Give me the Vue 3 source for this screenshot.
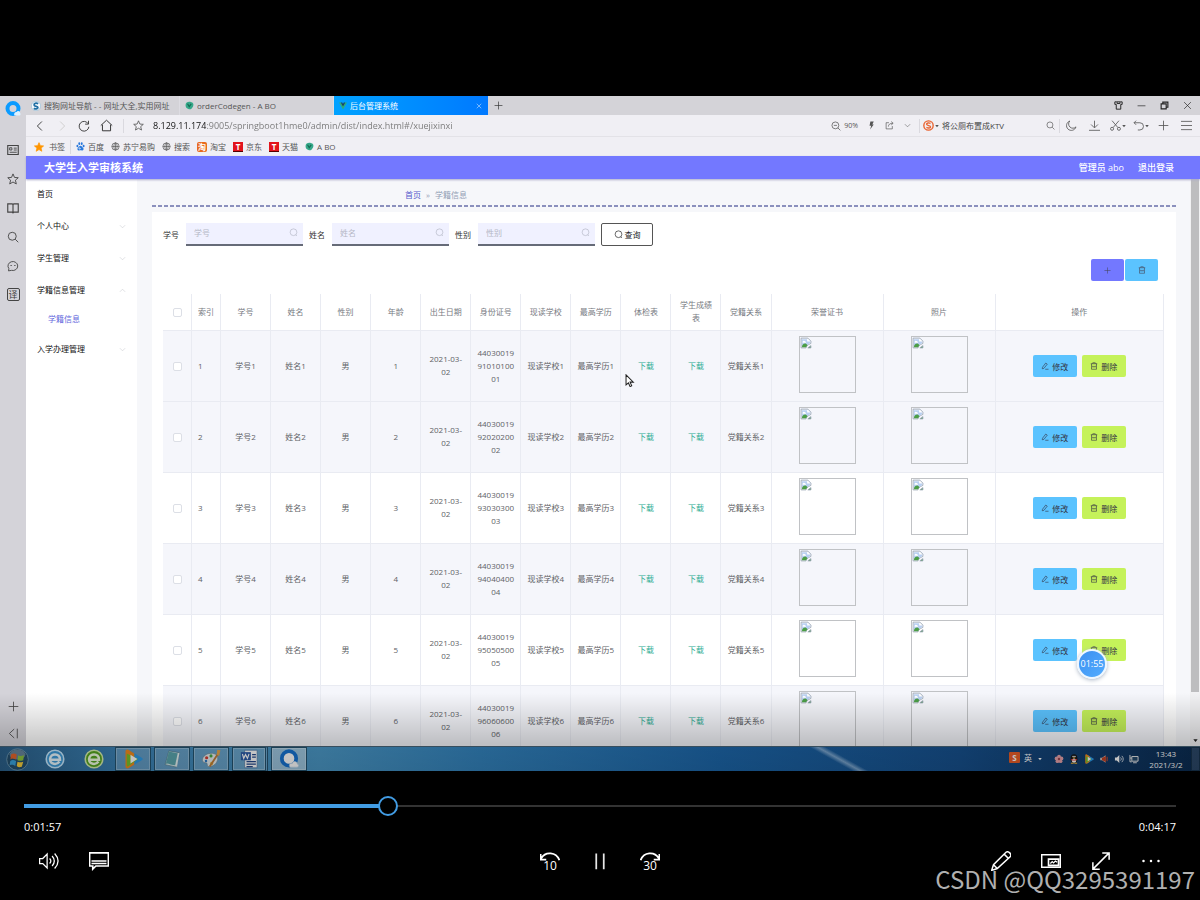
<script setup>
import { h, ref, computed } from 'vue'

const glyphs = {
  back: '<path d="M10.5 2 4.5 8l6 6"/>',
  forward: '<path d="M5.5 2l6 6-6 6"/>',
  reload: '<path d="M13.6 5A6.5 6.5 0 1 0 14.5 9"/><path d="M14 1v4.500h-4.500"/>',
  home: '<path d="M1 8 8 1.500 15 8M3 7v7.500h10V7"/>',
  star: '<path d="M8 1.200l2 4.700 5 .4-3.800 3.300 1.200 5L8 12l-4.400 2.600 1.200-5L1 6.300l5-.4z"/>',
  starFull: '<path fill="currentColor" d="M8 1l2.100 4.800 5.200.5-4 3.400 1.200 5.100L8 12.100l-4.500 2.700 1.200-5.100-4-3.400 5.200-.5z"/>',
  zoomOut: '<circle cx="7" cy="7" r="5.500"/><path d="M11 11l4 4M4.500 7h5"/>',
  search: '<circle cx="7" cy="7" r="5.300"/><path d="M11 11l4 4"/>',
  round: '<circle cx="8" cy="7.500" r="6"/><path d="M12 12l2 2.200"/>',
  flash: '<path fill="currentColor" stroke="none" d="M6 1h6l-2.500 5H12l-6.500 9 2-6.500H4.500z"/>',
  share: '<path d="M7 3H2v11h11V9M6 10c0-4 3-6 8-6M11 1l3.500 3L11 7"/>',
  down: '<path d="M2 5l6 6 6-6"/>',
  up: '<path d="M2 11l6-6 6 6"/>',
  caret: '<path fill="currentColor" stroke="none" d="M1 4h14L8 13z"/>',
  moon: '<path d="M5.500 1.500A7 7 0 1 0 14.500 10 6 6 0 0 1 5.500 1.500z"/>',
  download: '<path d="M8 1v10M3 6.500l5 5 5-5M0 15h16"/>',
  scissors: '<path d="M3 1l8.500 10M13 1 4.500 11"/><circle cx="3" cy="12.800" r="2.200"/><circle cx="13" cy="12.800" r="2.200"/>',
  undo: '<path d="M1.500 4h8.500a5 5 0 0 1 0 10.500H7M4.500 1l-3 3 3 3"/>',
  plus: '<path d="M8 1v14M1 8h14"/>',
  menu: '<path d="M0 2h16M0 8h16M0 14h16"/>',
  close: '<path d="M2 2l12 12M14 2 2 14"/>',
  min: '<path d="M1 8.500h14"/>',
  restore: '<path stroke-width="2" d="M2 5h9v9H2zM5 5V2h9v9h-3"/>',
  shirt: '<path stroke-width="1.700" d="M5 1.500H1.500V6H4v8.500h8V6h2.500V1.500H11M5 1.500h6M5.500 2v2.500h5V2"/>',
  card: '<path stroke-width="1.500" d="M1 2h14v12H1z"/><path d="M3.500 5h3v3h-3zM9 5.500h4M9 8h4M3.500 11H13"/>',
  book: '<path stroke-width="1.500" d="M1 2.500h6l1 1 1-1h6v11H9l-1 1-1-1H1zM8 3.500V14"/>',
  chat: '<path d="M2 14.500l.5-3A6.500 6 0 1 1 6 13.800z"/><path stroke-width="1.600" d="M5.500 6.500v1.500M10.500 6.500v1.500"/>',
  collapse: '<path d="M9 1.500 2 8l7 6.500M13.500 1v14"/>',
  globe: '<circle cx="8" cy="8" r="6.500"/><ellipse cx="8" cy="8" rx="3" ry="6.500"/><path d="M1.500 8h13M8 1.500v13"/>',
  paw: '<g fill="#2878dc" stroke="none"><ellipse cx="2.500" cy="7" rx="1.700" ry="2.200"/><ellipse cx="5.800" cy="3" rx="1.700" ry="2.400"/><ellipse cx="10.200" cy="3" rx="1.700" ry="2.400"/><ellipse cx="13.500" cy="7" rx="1.700" ry="2.200"/><path d="M8 6.500c2 0 3 2.500 4.500 3.800 2 2 .8 5-2 4.700-1.700-.2-3.300-.2-5 0-2.800.3-4-2.700-2-4.700C5 9 6 6.500 8 6.500z"/></g><circle cx="6.500" cy="11.500" r="1.200" stroke="#fff"/>',
  vue: '<path fill="#2fae7c" stroke="none" d="M0 1h4l4 7 4-7h4L8 15z"/><path fill="#24435a" stroke="none" d="M3.500 1h3L8 3.800 9.500 1h3L8 9z"/>',
  abo: '<path fill="#35a889" stroke="none" d="M1 7C1 2 7 0 11 2c4 0 5 5 3 8-2 4-5 6-8 4C2 13 1 10 1 7z"/><path stroke="#156b54" stroke-width="2" d="M4.500 5l3 5 3.500-5"/>',
  sogou: '<circle cx="8" cy="8" r="7.500" fill="#f4f8fb" stroke="#9fc3da"/><path stroke="#1f6fa5" stroke-width="2.800" d="M11.500 4.500C8 2.500 4.500 4 5 6.500s6 1.500 6 4-4 3-6.500 1.200"/>',
  sogouRed: '<circle cx="8" cy="8" r="6.800" stroke="#e9622f" stroke-width="2"/><path stroke="#e9622f" stroke-width="2" d="M11 5C9 3.800 5 4 5.200 6.200S11 7.800 11 10s-4 2-6 .8"/>',
  bin: '<path d="M1.500 3.500h13M3 3.500v11h10v-11M5.500 3.500v-2h5v2M5.500 7.500v3M10.500 7.500v3M5.500 9.500h5"/>',
  edit: '<path d="M3 10.500 9.500 2l3 2.300L6 12.500l-3.500 1zM8.500 14.500H15"/>',
  broken: '<path fill="#fff" stroke="#9aa6b5" d="M1.500 1.500h9l4 4v3l-3 1.500-2.500 2-1 2.500H1.500z"/><path fill="#b9d0f2" stroke="none" d="M2.500 3h7v3h4v2L8 12H2.500z"/><path fill="#fff" stroke="none" d="M3.500 6.500c0-2 3-2 3.500-.5 1.500 0 1.500 1.500.5 1.500h-4z"/><path fill="#4b9e46" stroke="none" d="M2.500 13.500c0-3 3-5.500 5.500-4.500l2 1.500-2 3z"/><path fill="#4b9e46" stroke="#9aa6b5" d="M10.500 14.500l4-3v3z"/>',
}
const art = {
  browser: '<circle cx="16" cy="15" r="11" fill="none" stroke="#0b9bff" stroke-width="8"/><path fill="#dff2ff" d="M19 29c-2-4 1-7 4-7 2-4 8-2 7 2 2 1 1 5-1 5z"/>',
  orb: '<circle cx="16" cy="16" r="15" fill="#24506f" stroke="#7fa8c0"/><ellipse cx="16" cy="9" rx="11" ry="7" fill="#fff" opacity=".3"/><path fill="#e4642b" d="M7 9c3-2 5-2 8 0l-1 7c-3-2-6-2-8 0z"/><path fill="#8cc43f" d="M17 10c3 2 5 1 8 0l-1 7c-3 1-6 1-8 0z"/><path fill="#39a3dc" d="M6 18c3-2 5-1 8 0l-1 7c-3-2-5-2-8-1z"/><path fill="#f9cf3d" d="M16 19c3 1 5 1 8 0l-2 7c-3 1-5 1-7-1z"/>',
  ie: '<circle cx="16" cy="16" r="14" fill="#3d9bd9" stroke="#c9eaff" stroke-width="2.500"/><path fill="none" stroke="#e9f8ff" stroke-width="4" d="M8 17h16c0-11-15-11-16-1 0 9 11 10 15 4"/>',
  ie360: '<circle cx="16" cy="16" r="14" fill="#56a51f" stroke="#d7f0ae" stroke-width="2.500"/><path fill="none" stroke="#f1ffe2" stroke-width="4" d="M8 17h16c0-11-15-11-16-1 0 9 11 10 15 4"/>',
  video: '<path fill="#2c9be8" d="M10 2l20 12c2 1 2 3 0 4L10 30z"/><path fill="#f28b1e" d="M4 4c0-3 3-4 6-2l8 5v18l-8 5c-3 2-6 1-6-2z"/><path fill="#78c22b" d="M6 7l18 9L8 28c-2 1-2-2-2-4z"/><path fill="#fff" d="M12 9l11 7-11 7z"/>',
  note: '<path fill="#d7ecef" stroke="#4b7787" d="M11 3l17 3-5 23L5 25z"/><path fill="#5ba6ae" d="M11 4l15 3-4 19C14 26 8 21 6 24z"/><path fill="#f7ffff" d="M25 7l3-1-4 23-3-3z" opacity=".8"/>',
  paint: '<path fill="#e6edf0" stroke="#6d8794" d="M15 7c9-1 14 5 11 12-2 6-9 10-14 9-4-1 0-5-4-6-5 0-7-3-5-8 2-4 7-7 12-7z"/><circle cx="9" cy="14" r="2.500" fill="#d63a2e"/><circle cx="16" cy="11" r="2.500" fill="#49a942"/><circle cx="8" cy="19" r="2" fill="#2d7cc8"/><circle cx="17" cy="23" r="2.500" fill="#e6bd2f"/><path stroke="#c17e39" stroke-width="3" d="M14 28 27 8"/><path fill="#e6a64b" d="M25 9l1-8 5 1-2 9z"/>',
  word: '<path fill="#fff" stroke="#47719e" d="M9 2h20v28H9z"/><path stroke="#23488b" stroke-width="2" d="M21 9h6M21 13h6M12 20h15M12 24h15M12 28h10"/><path fill="#2d5ba7" d="M3 5h16v13H3z"/><path fill="none" stroke="#fff" stroke-width="1.800" d="M5.500 8l2 7 3-6 3 6 2.500-7"/>',
  cloud: '<circle cx="16" cy="15" r="11.500" fill="#fff" stroke="#1673d1" stroke-width="6"/><path fill="#fff" stroke="#bcd7ee" d="M18 29c-3-2-1-7 3-6 2-5 9-3 8 1 4 1 2 5 0 5z"/>',
  flower: '<g fill="#e7a2aa"><circle cx="16" cy="8" r="6"/><circle cx="24" cy="14" r="6"/><circle cx="21" cy="23" r="6"/><circle cx="11" cy="23" r="6"/><circle cx="8" cy="14" r="6"/></g><circle cx="16" cy="16" r="4" fill="#a04952"/>',
  penguin: '<ellipse cx="16" cy="15" rx="11" ry="14" fill="#161616"/><ellipse cx="16" cy="21" rx="7" ry="7" fill="#fff"/><path fill="#d92b22" d="M6 15c6 4 14 4 20 0v3c-6 4-14 4-20 0z"/><path fill="#f6b42c" d="M11 11h10l-5 4zM6 28h9v3H6zM17 28h9v3h-9z"/><circle cx="13" cy="8" r="2.500" fill="#fff"/><circle cx="19" cy="8" r="2.500" fill="#fff"/>',
  horn: '<path fill="#d8d3cf" d="M4 12h6L21 4v24l-11-8H4z"/><path fill="#c34022" d="M9 13 22 6v20L9 19z"/><path fill="none" stroke="#d64d2d" stroke-width="3" d="M26 9v14"/>',
  sound: '<path fill="#fff" d="M3 11h6l8-8v26l-8-8H3z"/><path fill="none" stroke="#fff" stroke-width="2.500" d="M21 11c3 3 3 7 0 10M25 6c6 6 6 14 0 20"/>',
  net: '<path fill="#23496c" stroke="#eee" stroke-width="3" d="M9 8h20v15H9zM13 28h12M3 3v10h6M3 13v12h6"/>',
  volume: '<path fill="none" stroke="#fff" stroke-width="2" d="M1 12h5l7-7v22l-7-7H1zM17 12q4 4 0 8M21 8q7 8 0 16M25 4q11 12 0 24"/>',
  caption: '<path fill="none" stroke="#fff" stroke-width="2.600" d="M1 3h30v21H11l-5 5v-5H1zM4 16h24M4 20h24"/>',
  pencil: '<path fill="none" stroke="#fff" stroke-width="2.400" d="M1 31l3-9L24 2q3-2 6 1t1 6L10 28zM21 5l7 7M4 22l6 6"/>',
  mini: '<path fill="none" stroke="#fff" stroke-width="2.600" d="M1 6h30v20H1zM12 13h16v10H12z"/><path fill="none" stroke="#fff" stroke-width="2" d="M15 20l3-3 2 2 3-3 3 2"/>',
  full: '<path fill="none" stroke="#fff" stroke-width="2.400" d="M3 29 29 3M18 3h11v11M3 18v11h11"/>',
  more: '<g fill="#fff"><circle cx="4" cy="16" r="2"/><circle cx="16" cy="16" r="2"/><circle cx="28" cy="16" r="2"/></g>',
  pause: '<path stroke="#e6e6e6" stroke-width="2.800" d="M10 4v25M22 4v25"/>',
  rewind: '<path fill="none" stroke="#fff" stroke-width="2.800" d="M31 13C26 0 9-2 2 10M1 3v9h9"/>',
  skip: '<path fill="none" stroke="#fff" stroke-width="2.800" d="M1 13C6 0 23-2 30 10M31 3v9h-9"/>',
  cursor: '<path fill="#fff" stroke="#222" stroke-width="2.500" d="M5 2v25l6-5 4 9 4-2-4-9h8z"/>',
}
const Icon = (p) => h('svg', {
  class: 'icon', width: p.s || 10, height: p.s || 10, viewBox: '0 0 16 16', fill: 'none',
  stroke: 'currentColor', 'stroke-width': 1.2, 'aria-hidden': 'true', innerHTML: glyphs[p.n],
})
Icon.props = ['n', 's']
const Art = (p) => h('svg', {
  class: 'icon', width: p.s || 20, height: p.s || 20, viewBox: '0 0 32 32', 'aria-hidden': 'true', innerHTML: art[p.n],
})
Art.props = ['n', 's']

const bookmarks = [
  { icon: 'paw', label: '百度' }, { icon: 'globe', label: '苏宁易购' }, { icon: 'globe', label: '搜索' },
  { badge: '淘', kind: 'tao', label: '淘宝' }, { badge: 'T', kind: 'tee', label: '京东' },
  { badge: 'T', kind: 'tee', label: '天猫' }, { icon: 'abo', label: 'A BO' },
]
const menu = [
  { label: '首页' }, { label: '个人中心', icon: 'down' }, { label: '学生管理', icon: 'down' },
  { label: '学籍信息管理', icon: 'up', child: '学籍信息' }, { label: '入学办理管理', icon: 'down' },
]
const filters = ['学号', '姓名', '性别']
const columns = ['索引', '学号', '姓名', '性别', '年龄', '出生日期', '身份证号', '现读学校', '最高学历', '体检表', '学生成绩表', '党籍关系', '荣誉证书', '照片', '操作']
const rows = [1, 2, 3, 4, 5, 6].map((n) => ({ n, id: `440300199${n}0${n}0${n}000${n}` }))
const apps = ['video', 'note', 'paint', 'word', 'cloud']
const tray = ['flower', 'penguin', 'video', 'horn', 'sound', 'net']
const url = ref('8.129.11.174:9005/springboot1hme0/admin/dist/index.html#/xuejixinxi')
const query = ref('将公厕布置成KTV')
const position = ref(313)
const played = computed(() => ({ '--played': `${position.value / 10}%` }))
</script>

<template>
  <main class="player">
    <section class="screen">
      <div class="browser">
        <nav class="rail" aria-label="浏览器侧栏">
          <Art n="browser" :s="16" class="rail-logo" />
          <button v-for="i in ['card', 'star', 'book', 'search', 'chat']" :key="i" :aria-label="i"><Icon :n="i" :s="12" /></button>
          <button class="translate"><span>译</span></button>
          <span class="grow"></span>
          <button aria-label="添加"><Icon n="plus" :s="11" /></button>
          <button aria-label="收起"><Icon n="collapse" :s="11" /></button>
        </nav>
        <div class="window">
          <div class="tabs">
            <button class="tab"><Icon n="sogou" :s="10" /><span class="tab-text">搜狗网址导航 - - 网址大全,实用网址</span></button>
            <button class="tab"><Icon n="abo" :s="9" /><span class="tab-text">orderCodegen - A BO</span></button>
            <button class="tab active"><Icon n="vue" :s="8" /><span class="tab-text">后台管理系统</span><Icon n="close" :s="6" /></button>
            <button class="new-tab" aria-label="新标签页"><Icon n="plus" :s="9" /></button>
            <span class="grow"></span>
            <button v-for="i in ['shirt', 'min', 'restore', 'close']" :key="i" class="win" :aria-label="i"><Icon :n="i" :s="9" /></button>
          </div>
          <div class="address">
            <button class="tool dark" aria-label="后退"><Icon n="back" :s="12" /></button>
            <button class="tool pale" aria-label="前进"><Icon n="forward" :s="12" /></button>
            <button class="tool dark" aria-label="刷新"><Icon n="reload" :s="12" /></button>
            <button class="tool dark" aria-label="主页"><Icon n="home" :s="13" /></button>
            <i class="bar left"></i>
            <button class="tool" aria-label="收藏"><Icon n="star" :s="11" /></button>
            <input v-model="url" class="url" aria-label="地址" />
            <button class="zoom"><Icon n="zoomOut" :s="10" />90%</button>
            <button class="small" aria-label="极速"><Icon n="flash" :s="9" /></button>
            <button class="small" aria-label="分享"><Icon n="share" :s="9" /></button>
            <button class="small" aria-label="更多"><Icon n="down" :s="7" /></button>
            <i class="bar"></i>
            <div class="search">
              <Icon n="sogouRed" :s="11" /><Icon n="caret" :s="4" />
              <input v-model="query" aria-label="搜索" />
              <button aria-label="开始搜索"><Icon n="search" :s="9" /></button>
            </div>
            <i class="bar"></i>
            <button class="tool wide" aria-label="夜间"><Icon n="moon" :s="11" /></button>
            <button class="tool wide" aria-label="下载"><Icon n="download" :s="11" /></button>
            <button class="tool wide" aria-label="截图"><Icon n="scissors" :s="11" /><Icon n="caret" :s="4" /></button>
            <button class="tool wide" aria-label="撤销"><Icon n="undo" :s="11" /><Icon n="caret" :s="4" /></button>
            <button class="tool wide" aria-label="添加"><Icon n="plus" :s="11" /></button>
            <button class="tool wide" aria-label="菜单"><Icon n="menu" :s="11" /></button>
          </div>
          <div class="bookmarks">
            <a href="#" class="fav"><Icon n="starFull" :s="10" />书签</a>
            <i class="bar"></i>
            <a v-for="b in bookmarks" :key="b.label" href="#">
              <Icon v-if="b.icon" :n="b.icon" :s="9" /><b v-else :class="b.kind">{{ b.badge }}</b>{{ b.label }}
            </a>
          </div>
          <header class="app-head">
            <h1>大学生入学审核系统</h1>
            <span>管理员 abo</span>
            <a href="#">退出登录</a>
          </header>
          <div class="app">
            <nav class="menu">
              <template v-for="m in menu" :key="m.label">
                <a href="#">{{ m.label }}<Icon v-if="m.icon" :n="m.icon" :s="7" /></a>
                <a v-if="m.child" href="#" class="child">{{ m.child }}</a>
              </template>
            </nav>
            <div class="content">
              <div class="crumbs"><a href="#">首页</a><span>»</span><span>学籍信息</span></div>
              <div class="panel">
                <form class="filters" @submit.prevent>
                  <label v-for="f in filters" :key="f">{{ f }}
                    <span class="field"><input :placeholder="f" /><Icon n="round" :s="9" /></span>
                  </label>
                  <button class="query"><Icon n="round" :s="9" />查询</button>
                </form>
                <div class="actions">
                  <button class="add" aria-label="新增"><Icon n="plus" :s="7" /></button>
                  <button class="remove" aria-label="删除"><Icon n="bin" :s="8" /></button>
                </div>
                <table>
                  <colgroup>
                    <col class="c-s" /><col class="c-s" /><col v-for="n in 11" :key="n" class="c-m" /><col class="c-l" /><col class="c-l" /><col />
                  </colgroup>
                  <thead>
                    <tr><th><input type="checkbox" aria-label="全选" /></th><th v-for="c in columns" :key="c">{{ c }}</th></tr>
                  </thead>
                  <tbody>
                    <tr v-for="r in rows" :key="r.n">
                      <td><input type="checkbox" :aria-label="'选择' + r.n" /></td>
                      <td class="index">{{ r.n }}</td>
                      <td>学号{{ r.n }}</td>
                      <td>姓名{{ r.n }}</td>
                      <td>男</td>
                      <td>{{ r.n }}</td>
                      <td>2021-03-02</td>
                      <td class="break">{{ r.id }}</td>
                      <td>现读学校{{ r.n }}</td>
                      <td>最高学历{{ r.n }}</td>
                      <td><a href="#">下载</a></td>
                      <td><a href="#">下载</a></td>
                      <td>党籍关系{{ r.n }}</td>
                      <td><span class="photo"><Icon n="broken" :s="12" /></span></td>
                      <td><span class="photo"><Icon n="broken" :s="12" /></span></td>
                      <td>
                        <div class="ops">
                          <button class="op-edit"><Icon n="edit" :s="8" />修改</button>
                          <button class="op-del"><Icon n="bin" :s="8" />删除</button>
                        </div>
                      </td>
                    </tr>
                  </tbody>
                </table>
              </div>
            </div>
            <div class="scroll"><span></span><Icon n="caret" :s="5" /></div>
          </div>
        </div>
      </div>
      <Art n="cursor" :s="13" class="cursor" />
      <div class="timer">01:55</div>
      <footer class="taskbar">
        <button class="start" aria-label="开始"><Art n="orb" :s="23" /></button>
        <button aria-label="IE"><Art n="ie" :s="20" /></button>
        <button aria-label="360"><Art n="ie360" :s="20" /></button>
        <button v-for="a in apps" :key="a" class="open" :class="a" :aria-label="a"><Art :n="a" :s="20" /></button>
        <span class="grow"></span>
        <b class="ime">S</b><span class="lang">英</span><Icon n="caret" :s="4" />
        <div class="tray"><Art v-for="t in tray" :key="t" :n="t" :s="10" /></div>
        <div class="clock">13:43<br />2021/3/2</div>
        <button class="desktop" aria-label="显示桌面"></button>
      </footer>
      <div class="shade"></div>
    </section>
    <section class="controls">
      <input v-model.number="position" type="range" min="0" max="1000" aria-label="播放进度" :style="played" />
      <div class="times"><span>0:01:57</span><span>0:04:17</span></div>
      <div class="buttons">
        <div class="group">
          <button aria-label="音量"><Art n="volume" /></button>
          <button aria-label="字幕"><Art n="caption" /></button>
        </div>
        <div class="group">
          <button class="jump"><Art n="rewind" /><span>10</span></button>
          <button aria-label="暂停"><Art n="pause" /></button>
          <button class="jump"><Art n="skip" /><span>30</span></button>
        </div>
        <div class="group end">
          <button v-for="i in ['pencil', 'mini', 'full', 'more']" :key="i" :aria-label="i"><Art :n="i" /></button>
        </div>
      </div>
    </section>
    <div class="watermark">CSDN @QQ3295391197</div>
  </main>
</template>

<style>
body { background: #000; }
</style>

<style scoped>
* { box-sizing: border-box; }
.player {
  position: relative;
  display: grid;
  grid-template-rows: 96px minmax(0, 1fr) 129px;
  height: 100vh;
  min-height: 480px;
  overflow: hidden;
  background: #000;
  font-family: "Open Sans", "Noto Sans CJK SC", sans-serif;
  font-size: 8px;
  line-height: 12px;
}
button { display: flex; align-items: center; justify-content: center; padding: 0; border: 0; background: none; color: inherit; font: inherit; white-space: nowrap; }
input { padding: 0; border: 0; background: none; font: inherit; min-width: 0; }
a { color: inherit; text-decoration: none; }
.icon { display: block; flex: none; }
.grow { flex: 1; }
.screen { grid-row: 2; position: relative; display: flex; flex-direction: column; overflow: hidden; }
.browser { flex: 1; min-height: 0; display: flex; background: #f0eff4; }
.rail { width: 26px; flex: none; display: flex; flex-direction: column; align-items: center; background: #d4d3d9; color: #444; padding-top: 5px; }
.rail-logo { margin-bottom: 18px; }
.rail button { width: 24px; height: 29px; flex: none; }
.rail button:last-child { height: 25px; }
.translate span { width: 13px; height: 13px; border: 1px solid #444; border-radius: 2px; font-size: 9px; line-height: 11px; }
.window { flex: 1; min-width: 0; display: flex; flex-direction: column; }
.tabs { display: flex; height: 19px; flex: none; background: #d4d3d8; color: #555; padding-right: 1px; }
.tab { width: 154px; padding: 0 6px 0 5px; gap: 3px; justify-content: flex-start; border-right: 1px solid #dddce2; }
.tab-text { flex: 1; overflow: hidden; text-align: left; }
.tab.active { background: linear-gradient(90deg, #00a2ff, #0079ff); color: #fff; border: 0; }
.new-tab { width: 20px; color: #333; }
.win { width: 23px; color: #222; }
.address { display: flex; align-items: center; height: 22px; flex: none; padding: 0 2px 0 3px; color: #555; border-bottom: 1px solid #e3e2e7; }
.tool { width: 22px; height: 20px; flex: none; gap: 1px; }
.wide { width: 23px; }
.dark { color: #333; }
.pale { color: #ccc; }
.bar { width: 1px; height: 14px; flex: none; background: #dad9df; }
.bar.left { margin: 0 3px 0 6px; }
.url { flex: 1; margin-left: 4px; font-size: 9px; line-height: 14px; color: transparent; background: linear-gradient(90deg, #111 53px, #777 53px); background-clip: text; -webkit-background-clip: text; }
.zoom { gap: 3px; font-size: 7px; margin-right: 4px; }
.small { width: 18px; height: 18px; }
.small + .bar { margin-left: 3px; }
.search { display: flex; align-items: center; width: 136px; margin-left: 3px; gap: 1px; }
.search input { flex: 1; margin-left: 2px; color: #444; }
.search button { width: 18px; height: 18px; }
.bookmarks { display: flex; align-items: center; height: 19px; flex: none; padding: 0 8px; gap: 7px; color: #555; white-space: nowrap; }
.bookmarks a { display: flex; align-items: center; gap: 3px; }
.bookmarks .bar { margin: 0 -2px; }
.fav .icon { color: #ff9500; margin-right: 2px; }
.tee, .tao { width: 10px; height: 10px; text-align: center; line-height: 10px; color: #fff; background: #e2141c; border-bottom: 1px solid #500; }
.tao { border: 0; border-radius: 2px; background: #e86a1c; font-size: 8px; }
.app-head { display: flex; align-items: center; height: 23px; flex: none; padding: 0 26px 0 18px; gap: 14px; background: #7378ff; color: #fff; font-size: 9px; font-weight: 500; box-shadow: 0 1px 2px #aaaacb; z-index: 1; }
.app-head h1 { flex: 1; margin: 0; font-size: 11px; line-height: 16px; font-weight: 700; }
.app { flex: 1; min-height: 0; display: flex; background: #f6f7fa; }
.menu { width: 111px; flex: none; display: flex; flex-direction: column; background: #fff; color: #111; }
.menu a { display: flex; align-items: center; justify-content: space-between; height: 32px; padding: 0 11px; }
.menu a:first-child { height: 31px; padding-bottom: 2px; }
.menu .icon { color: #c4c6cc; }
.menu .child { height: 27px; padding: 0 0 2px 22px; color: #6468dd; }
.content { flex: 1; min-width: 0; overflow: hidden; padding: 0 14px 0 15px; display: flex; flex-direction: column; }
.crumbs { display: flex; align-items: center; height: 28px; flex: none; padding: 4px 0 0 253px; gap: 5px; margin-bottom: 5px; color: #93a0b5; position: relative; }
.crumbs::after { content: ""; position: absolute; left: 0; right: 0; bottom: 0; height: 2px; background: repeating-linear-gradient(90deg, #8b90bd 0 4px, transparent 4px 6px); }
.crumbs a { color: #5559cc; }
.panel { flex: 1; background: #fff; padding: 11px 12px 0 11px; color: #606266; }
.filters { display: flex; gap: 6px; height: 23px; }
.filters label { display: flex; align-items: center; gap: 7px; color: #333; white-space: nowrap; }
.field { display: flex; align-items: center; width: 117px; height: 23px; padding: 0 5px 2px 8px; background: #f0f1ff; border-bottom: 2px solid #666b78; color: #b5b8c6; }
.field input { flex: 1; height: 18px; }
.field input::placeholder { color: #b5b8c6; }
.query { width: 52px; gap: 2px; border: 1px solid #555; border-radius: 2px; color: #222; background: #fff; }
.actions { display: flex; justify-content: flex-end; gap: 1px; margin: 13px 6px 13px 0; }
.actions button { width: 33px; height: 22px; border-radius: 2px; color: #445; }
.add { background: #7378ff; }
.remove, .op-edit { background: #5bc3ff; }
table { width: 100%; table-layout: fixed; border-collapse: separate; border-spacing: 0; }
.c-s { width: 29px; }
.c-m { width: 5%; }
.c-l { width: 112px; }
th, td { padding: 0 5px 2px; text-align: center; vertical-align: middle; border-right: 1px solid #e9ebf2; border-bottom: 1px solid #e9ebf2; line-height: 13px; }
th { height: 37px; font-weight: 400; color: #777a82; padding: 0 8px 2px; }
th:nth-child(2) { padding: 0 0 2px; }
th:first-child, td:first-child { padding: 0; }
td { height: 71px; }
.break { word-break: break-all; }
td.index { text-align: left; padding: 0 6px 2px; }
tbody tr:first-child, tbody tr:nth-child(even) { background: #f5f6fb; }
td a { color: #2cac93; }
td:nth-child(n+9):nth-child(-n+13) { padding: 0 2px 2px; }
input[type="checkbox"] { appearance: none; display: block; width: 9px; height: 9px; margin: 0 auto; border: 1px solid #dcdfe6; border-radius: 2px; background: #fff; }
.photo { display: block; width: 57px; height: 57px; margin: 0 auto 1px; border: 1px solid #c0c2c5; }
.ops { display: flex; justify-content: center; gap: 5px; padding-top: 2px; }
.ops button { width: 44px; height: 22px; gap: 3px; border-radius: 2px; color: #334; }
.op-del { background: #c5f25a; }
.scroll { width: 10px; flex: none; display: flex; flex-direction: column; align-items: center; justify-content: space-between; background: #f1f1f3; padding-bottom: 3px; color: #222; }
.scroll span { width: 8px; height: 91%; background: #bdbdbf; }
.cursor { position: absolute; left: 624px; top: 278px; }
.timer { position: absolute; right: 93px; bottom: 92px; width: 30px; height: 30px; border: 2px solid #eef7ff; border-radius: 50%; background: linear-gradient(135deg, #3c8ff0, #53adff); color: #fff; font-size: 9px; line-height: 26px; text-align: center; box-shadow: 0 1px 4px #a9b5c5; }
.taskbar { height: 25px; flex: none; display: flex; align-items: center; gap: 3px; border-top: 1px solid #476478; color: #fff; background: linear-gradient(29deg, transparent 42%, #a8c8e6aa 50%, transparent 58%) 71% 0 / 60px 100% no-repeat, linear-gradient(90deg, #2b608a 0, #3b82b5 120px, #4b98c6 320px, #3383bd 480px, #1c66a9 720px, #16508d 960px, #0b2b50 100%); }
.taskbar button { width: 36px; height: 24px; flex: none; }
.taskbar .start { width: 34px; }
.taskbar .open { border: 1px solid #23536f; background: #ffffff33; box-shadow: inset 0 0 0 1px #ffffff44; }
.taskbar .word { border-right: 3px double #24516f; }
.taskbar .cloud { background: #ffffff77; }
.ime { width: 11px; height: 11px; margin-bottom: 3px; border-radius: 1px; background: #e75d27; text-align: center; line-height: 11px; }
.lang { margin: 0 3px 3px 1px; }
.tray { display: flex; gap: 5px; margin-left: 9px; }
.clock { width: 44px; text-align: center; line-height: 11px; margin-left: 2px; }
.taskbar .desktop { width: 9px; border: 1px solid #17334d; background: #ffffff22; }
.shade { position: absolute; inset: auto 0 0; height: 78px; background: linear-gradient(#0000, #00000038 50px, #00000040); pointer-events: none; }
.controls { grid-row: 3; display: flex; flex-direction: column; padding: 25px 24px 0; color: #fff; }
.controls input { appearance: none; width: 100%; height: 20px; margin: 0; background: linear-gradient(#429ce3, #429ce3) 0 50% / var(--played) 4px no-repeat, linear-gradient(#333, #333) 0 50% / 100% 2px no-repeat; }
.controls input::-webkit-slider-thumb { appearance: none; width: 20px; height: 20px; border: 2px solid #429ce3; border-radius: 50%; background: #000; }
.times { display: flex; justify-content: space-between; margin-top: 3px; font-size: 11px; line-height: 16px; }
.buttons { display: grid; grid-template-columns: 1fr auto 1fr; margin-top: 6px; }
.group { display: flex; }
.end { justify-content: flex-end; }
.group button { width: 50px; height: 40px; }
.group .jump { flex-direction: column; justify-content: flex-start; padding-top: 11px; }
.jump span { margin-top: -14px; font-size: 12px; line-height: 16px; }
.watermark { position: absolute; right: 5px; bottom: 9px; color: #b0b0b0; font-family: "Noto Sans CJK SC", sans-serif; font-size: 24px; line-height: 24px; }
</style>
